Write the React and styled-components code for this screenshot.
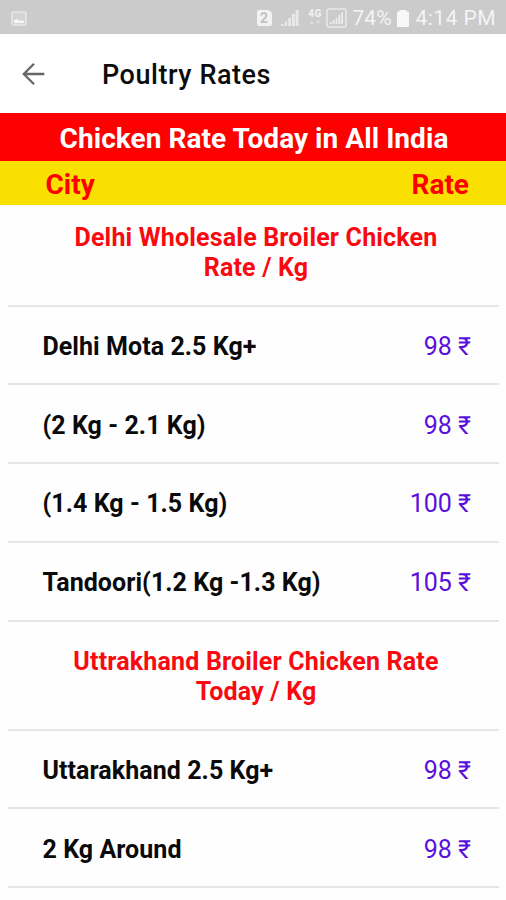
import React from 'react';
import styled, { createGlobalStyle } from 'styled-components';

const GlobalStyle = createGlobalStyle`
  * {
    box-sizing: border-box;
  }
  body {
    margin: 0;
    background: #fff;
    font-family: Roboto, "Noto Sans", sans-serif;
    overflow: hidden;
  }
`;

const Screen = styled.div`
  width: 506px;
  height: 900px;
  overflow: hidden;
  background: #fefefe;
`;

const StatusBar = styled.div`
  display: flex;
  align-items: center;
  justify-content: space-between;
  height: 34px;
  padding: 2px 10px 0 11px;
  background: #cbcbcb;
  color: #f4f4f4;
`;

const StatusIcons = styled.div`
  display: flex;
  align-items: center;
`;

const StatusText = styled.span`
  font-size: 21px;
  line-height: 34px;
  letter-spacing: ${props => props.$spacing || '0'};
`;

const SimBadge = styled.span`
  width: 15px;
  height: 16px;
  border-radius: 2px 5px 2px 2px;
  background: #f2f2f2;
  color: #c2c2c2;
  font-size: 14px;
  font-weight: 700;
  line-height: 16px;
  text-align: center;
`;

const IconSlot = styled.span`
  display: flex;
  margin: 0 ${props => props.$right || '0'} 0 ${props => props.$left || '0'};
`;

const NetworkLabel = styled.span`
  display: flex;
  flex-direction: column;
  align-items: center;
  gap: 2px;
  width: 15px;
  height: 19px;
  font-size: 10px;
  font-weight: 700;
  line-height: 10px;
  letter-spacing: 0.5px;
`;

const Toolbar = styled.header`
  display: flex;
  align-items: center;
  height: 79px;
  padding: 0 21px;
  background: #fff;
`;

const BackButton = styled.button`
  display: flex;
  width: 24px;
  height: 24px;
  padding: 0;
  border: 0;
  background: none;
`;

const Title = styled.h1`
  margin: 2px 0 0 57px;
  font-size: 27px;
  font-weight: 500;
  line-height: 32px;
  letter-spacing: 0.55px;
  color: #0c0c0c;
`;

const Banner = styled.div`
  height: 48px;
  padding-top: 2px;
  padding-left: 2px;
  background: #fe0000;
  color: #fff;
  font-size: 28px;
  font-weight: 700;
  line-height: 48px;
  letter-spacing: 0.05px;
  text-align: center;
`;

const Columns = styled.div`
  display: flex;
  justify-content: space-between;
  height: 44px;
  padding: 2px 37px 0 45.5px;
  background: #f9e000;
  color: #fe0000;
  font-size: 28px;
  font-weight: 700;
  line-height: 44px;
`;

const List = styled.div`
  margin: -7.4px 7px 0 8px;
`;

const GroupTitle = styled.div`
  height: 108.9px;
  padding: 25.4px 46px 0 51px;
  border-bottom: 2px solid #e6e6e6;
  color: #f90a10;
  font-size: 25px;
  font-weight: 700;
  line-height: 30px;
  letter-spacing: 0.18px;
  text-align: center;
  white-space: pre-line;
`;

const Row = styled.div`
  display: flex;
  align-items: center;
  justify-content: space-between;
  height: 78.8px;
  padding: 3px 28px 0 34.5px;
  border-bottom: 2px solid #e6e6e6;
  font-size: 25px;
`;

const City = styled.span`
  color: #0a0a0a;
  font-weight: 700;
  letter-spacing: 0.06px;
`;

const Rate = styled.span`
  color: #5a10dc;
`;

const groups = [
  {
    title: 'Delhi Wholesale Broiler Chicken\nRate / Kg',
    rows: [
      ['Delhi Mota 2.5 Kg+', 98],
      ['(2 Kg - 2.1 Kg)', 98],
      ['(1.4 Kg - 1.5 Kg)', 100],
      ['Tandoori(1.2 Kg -1.3 Kg)', 105],
    ],
  },
  {
    title: 'Uttrakhand Broiler Chicken Rate\nToday / Kg',
    rows: [
      ['Uttarakhand 2.5 Kg+', 98],
      ['2 Kg Around', 98],
    ],
  },
];

const PictureIcon = () => (
  <svg width="16" height="15" viewBox="0 0 16 15">
    <rect x="1" y="1" width="14" height="13" rx="1.5" fill="#d4d4d4" stroke="#e6e6e6" strokeWidth="1.6" />
    <path d="M3 12V9l3-1 3 2 2-1 2 1.500V12z" fill="#f6f6f6" />
  </svg>
);

const SignalIcon = () => (
  <svg width="18" height="18" viewBox="0 0 18 18">
    <path d="M0 17v-2h2.400v2zM3.600 17v-4.500h2.600V17zM7.200 17V9h2.800v8zM10.900 17V5h2.900v12zM14.600 17V1h2.900v16z" fill="#e9e9e9" />
  </svg>
);

const NetworkArrows = () => (
  <svg width="10" height="4" viewBox="0 0 10 4">
    <path d="M0 3l2-3 2 3zM6 0h4L8 3z" fill="#e0e0e0" />
  </svg>
);

const BoxedSignalIcon = () => (
  <svg width="21" height="20" viewBox="0 0 21 20">
    <rect x="1" y="1" width="19" height="18" rx="2" fill="none" stroke="#e9e9e9" strokeWidth="1.5" />
    <path d="M4 16v-2h1.800v2zM6.800 16v-4h1.800v4zM9.600 16v-6h1.800v6zM12.400 16V7h1.800v9zM15.200 16V4.500H17V16z" fill="#ececec" />
  </svg>
);

const BatteryIcon = () => (
  <svg width="12" height="17" viewBox="0 0 12 17">
    <path d="M2.500 0h7v1.500H11a1 1 0 0 1 1 1V16a1 1 0 0 1-1 1H1a1 1 0 0 1-1-1V2.500a1 1 0 0 1 1-1h1.500z" fill="#f8f8f8" />
  </svg>
);

const BackArrow = () => (
  <svg width="24" height="24" viewBox="0 0 24 24" fill="none" stroke="#666" strokeWidth="2.3">
    <path d="M23.300 12H2.800M13 1.800L2.800 12 13 22.200" />
  </svg>
);

class RateList extends React.Component {
  render() {
    return (
      <List>
        {groups.map(group => (
          <React.Fragment key={group.title}>
            <GroupTitle>{group.title}</GroupTitle>
            {group.rows.map(([city, rate]) => (
              <Row key={city}>
                <City>{city}</City>
                <Rate>{rate} ₹</Rate>
              </Row>
            ))}
          </React.Fragment>
        ))}
      </List>
    );
  }
}

class App extends React.Component {
  render() {
    return (
      <Screen>
        <GlobalStyle />
        <StatusBar>
          <PictureIcon />
          <StatusIcons>
            <SimBadge>2</SimBadge>
            <IconSlot $left="9px" $right="9px"><SignalIcon /></IconSlot>
            <NetworkLabel>4G<NetworkArrows /></NetworkLabel>
            <IconSlot $left="3px" $right="6px"><BoxedSignalIcon /></IconSlot>
            <StatusText>74%</StatusText>
            <IconSlot $left="5px" $right="7px"><BatteryIcon /></IconSlot>
            <StatusText $spacing="0.45px">4:14 PM</StatusText>
          </StatusIcons>
        </StatusBar>
        <Toolbar>
          <BackButton aria-label="Back"><BackArrow /></BackButton>
          <Title>Poultry Rates</Title>
        </Toolbar>
        <Banner>Chicken Rate Today in All India</Banner>
        <Columns>
          <span>City</span>
          <span>Rate</span>
        </Columns>
        <RateList />
      </Screen>
    );
  }
}

export default App;
